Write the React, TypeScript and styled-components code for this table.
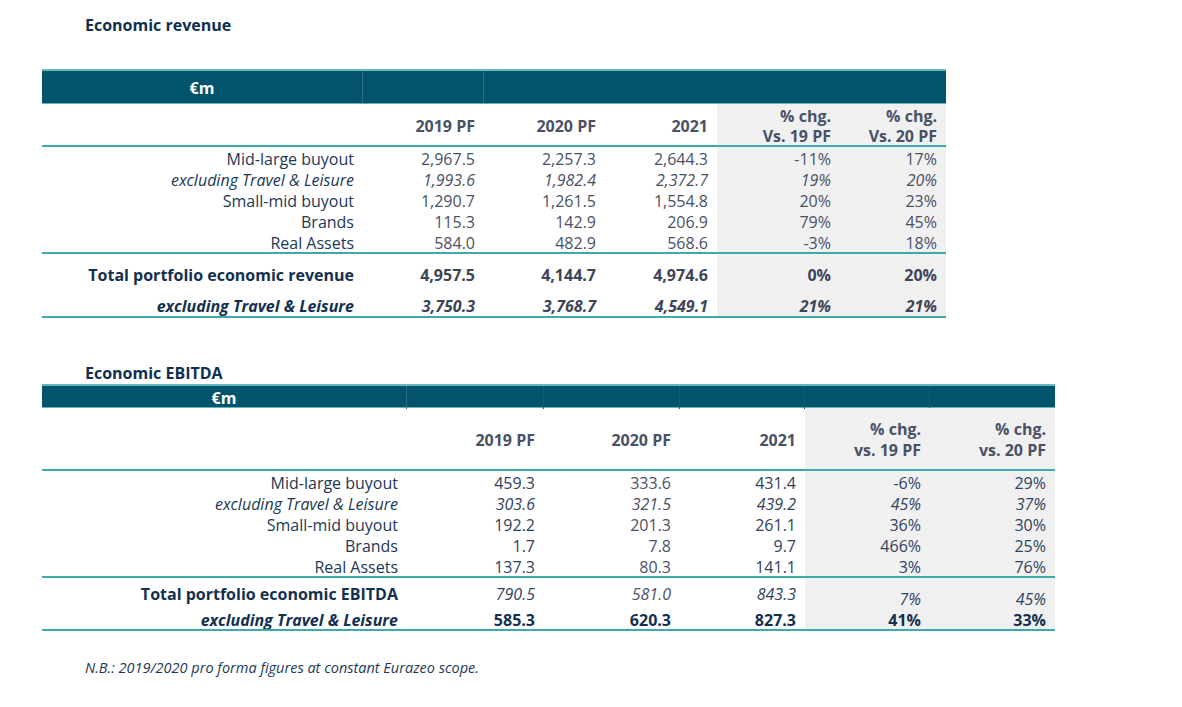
import React from "react";
import styled, { createGlobalStyle } from "styled-components";

const Global = createGlobalStyle`
  html, body { margin: 0; padding: 0; background: #ffffff; }
  body { font-family: "Open Sans", "Noto Sans", Arial, sans-serif; }
`;

const Page = styled.div`
  width: 1182px;
  height: 707px;
  box-sizing: border-box;
  padding: 14px 0 0 42px;
  display: flex;
  flex-direction: column;
  color: #1c3857;
`;

const Title = styled.div<{ $mt: number }>`
  margin: ${(p) => p.$mt}px 0 0 43px;
  padding-top: 1px;
  height: 20px;
  font-size: 16px;
  line-height: 20px;
  font-weight: 700;
  color: #0f2f52;
`;

const Table = styled.div<{ $w: number; $mt: number }>`
  width: ${(p) => p.$w}px;
  margin-top: ${(p) => p.$mt}px;
  display: flex;
  flex-direction: column;
`;

const Row = styled.div<{ $cols: string; $h: number; $rule?: boolean }>`
  display: grid;
  grid-template-columns: ${(p) => p.$cols};
  height: ${(p) => p.$h}px;
  border-top: ${(p) => (p.$rule ? "2px solid #3fa9ab" : "none")};
`;

const Bar = styled(Row)`
  background: #04536d;
  border-top: 2px solid #66b9bb;
  border-bottom: 1px solid #5fb3b4;
  box-sizing: border-box;
`;

const BarCell = styled.div<{ $span?: number; $line?: string }>`
  grid-column: span ${(p) => p.$span ?? 1};
  display: flex;
  align-items: center;
  justify-content: center;
  padding-top: 1px;
  color: #ffffff;
  font-weight: 700;
  font-size: 16px;
  border-right: 1px solid ${(p) => p.$line ?? "transparent"};
`;

const Cell = styled.div<{
  $shade?: boolean;
  $bold?: boolean;
  $italic?: boolean;
  $tone?: string;
  $end?: boolean;
}>`
  display: flex;
  align-items: ${(p) => (p.$end ? "flex-end" : "center")};
  justify-content: flex-end;
  text-align: right;
  padding: ${(p) => (p.$end ? "0" : "2px")} 9px 0 0;
  background: ${(p) => (p.$shade ? "#f0f0f0" : "transparent")};
  font-size: 16px;
  line-height: 18px;
  font-weight: ${(p) => (p.$bold ? 700 : 400)};
  font-style: ${(p) => (p.$italic ? "italic" : "normal")};
  color: ${(p) => p.$tone ?? "#4a5166"};
  white-space: nowrap;
`;

const HeadCell = styled(Cell)<{ $lh?: number }>`
  font-weight: 700;
  line-height: ${(p) => p.$lh ?? 20}px;
  color: #4a5166;
`;

const Note = styled.div`
  margin: 28px 0 0 43px;
  font-size: 14.5px;
  line-height: 18px;
  font-style: italic;
  color: #1c3857;
`;

const NAVY = "#1c3857";
const GREY = "#4a5166";

type Line = {
  label: string;
  vals: string[];
  italic?: boolean;
};

const COLS1 = "321px 121px 121px 112px 123px 106px";
const COLS2 = "365px 137px 136px 125px 125px 125px";

const rev: Line[] = [
  { label: "Mid-large buyout", vals: ["2,967.5", "2,257.3", "2,644.3", "-11%", "17%"] },
  { label: "excluding Travel & Leisure", vals: ["1,993.6", "1,982.4", "2,372.7", "19%", "20%"], italic: true },
  { label: "Small-mid buyout", vals: ["1,290.7", "1,261.5", "1,554.8", "20%", "23%"] },
  { label: "Brands", vals: ["115.3", "142.9", "206.9", "79%", "45%"] },
  { label: "Real Assets", vals: ["584.0", "482.9", "568.6", "-3%", "18%"] },
];

const ebitda: Line[] = [
  { label: "Mid-large buyout", vals: ["459.3", "333.6", "431.4", "-6%", "29%"] },
  { label: "excluding Travel & Leisure", vals: ["303.6", "321.5", "439.2", "45%", "37%"], italic: true },
  { label: "Small-mid buyout", vals: ["192.2", "201.3", "261.1", "36%", "30%"] },
  { label: "Brands", vals: ["1.7", "7.8", "9.7", "466%", "25%"] },
  { label: "Real Assets", vals: ["137.3", "80.3", "141.1", "3%", "76%"] },
];

const ebitdaTones = ["#2f4260", GREY, "#2f4260", "#2f4260", "#2f4260"];

export default function App() {
  return (
    <>
      <Global />
      <Page>
        <Title $mt={0}>Economic revenue</Title>
        <Table $w={904} $mt={34}>
          <Bar $cols={COLS1} $h={35}>
            <BarCell $line="#2f7088">€m</BarCell>
            <BarCell $line="#2f7088" />
            <BarCell $span={4} />
          </Bar>
          <Row $cols={COLS1} $h={41}>
            <HeadCell />
            <HeadCell>2019 PF</HeadCell>
            <HeadCell>2020 PF</HeadCell>
            <HeadCell>2021</HeadCell>
            <HeadCell $shade>
              % chg.
              <br />
              Vs. 19 PF
            </HeadCell>
            <HeadCell $shade>
              % chg.
              <br />
              Vs. 20 PF
            </HeadCell>
          </Row>
          {rev.map((r, i) => (
            <Row key={r.label + i} $cols={COLS1} $h={21} $rule={i === 0}>
              <Cell $tone={NAVY} $italic={r.italic}>{r.label}</Cell>
              {r.vals.map((v, j) => (
                <Cell key={j} $italic={r.italic} $shade={j >= 3}>
                  {v}
                </Cell>
              ))}
            </Row>
          ))}
          <Row $cols={COLS1} $h={40} $rule>
            <Cell $tone="#13304f" $bold>Total portfolio economic revenue</Cell>
            {["4,957.5", "4,144.7", "4,974.6", "0%", "20%"].map((v, j) => (
              <Cell key={j} $bold $tone="#3d4558" $shade={j >= 3}>
                {v}
              </Cell>
            ))}
          </Row>
          <Row $cols={COLS1} $h={22}>
            <Cell $tone="#13304f" $bold $italic>excluding Travel &amp; Leisure</Cell>
            {["3,750.3", "3,768.7", "4,549.1", "21%", "21%"].map((v, j) => (
              <Cell key={j} $bold $italic $tone="#3d4558" $shade={j >= 3}>
                {v}
              </Cell>
            ))}
          </Row>
          <Row $cols={COLS1} $h={0} $rule />
        </Table>

        <Title $mt={44}>Economic EBITDA</Title>
        <Table $w={1013} $mt={1}>
          <Bar $cols={COLS2} $h={24}>
            <BarCell $line="#2f7088">€m</BarCell>
            <BarCell $line="#0f5d76" />
            <BarCell $line="#0f5d76" />
            <BarCell $line="#0f5d76" />
            <BarCell $line="#0f5d76" />
            <BarCell />
          </Bar>
          <Row $cols={COLS2} $h={61}>
            <HeadCell />
            <HeadCell>2019 PF</HeadCell>
            <HeadCell>2020 PF</HeadCell>
            <HeadCell>2021</HeadCell>
            <HeadCell $shade $lh={21}>
              % chg.
              <br />
              vs. 19 PF
            </HeadCell>
            <HeadCell $shade $lh={21}>
              % chg.
              <br />
              vs. 20 PF
            </HeadCell>
          </Row>
          {ebitda.map((r, i) => (
            <Row key={r.label + i} $cols={COLS2} $h={21} $rule={i === 0}>
              <Cell $tone={NAVY} $italic={r.italic}>{r.label}</Cell>
              {r.vals.map((v, j) => (
                <Cell key={j} $italic={r.italic} $shade={j >= 3} $tone={ebitdaTones[j]}>
                  {v}
                </Cell>
              ))}
            </Row>
          ))}
          <Row $cols={COLS2} $h={30} $rule>
            <Cell $tone="#13304f" $bold>Total portfolio economic EBITDA</Cell>
            {["790.5", "581.0", "843.3", "7%", "45%"].map((v, j) => (
              <Cell key={j} $italic $shade={j >= 3} $end={j >= 3} $tone={ebitdaTones[j]}>
                {v}
              </Cell>
            ))}
          </Row>
          <Row $cols={COLS2} $h={21}>
            <Cell $tone="#13304f" $bold $italic>excluding Travel &amp; Leisure</Cell>
            {["585.3", "620.3", "827.3", "41%", "33%"].map((v, j) => (
              <Cell key={j} $bold $shade={j >= 3} $tone="#13304f">
                {v}
              </Cell>
            ))}
          </Row>
          <Row $cols={COLS2} $h={0} $rule />
        </Table>

        <Note>N.B.: 2019/2020 pro forma figures at constant Eurazeo scope.</Note>
      </Page>
    </>
  );
}
